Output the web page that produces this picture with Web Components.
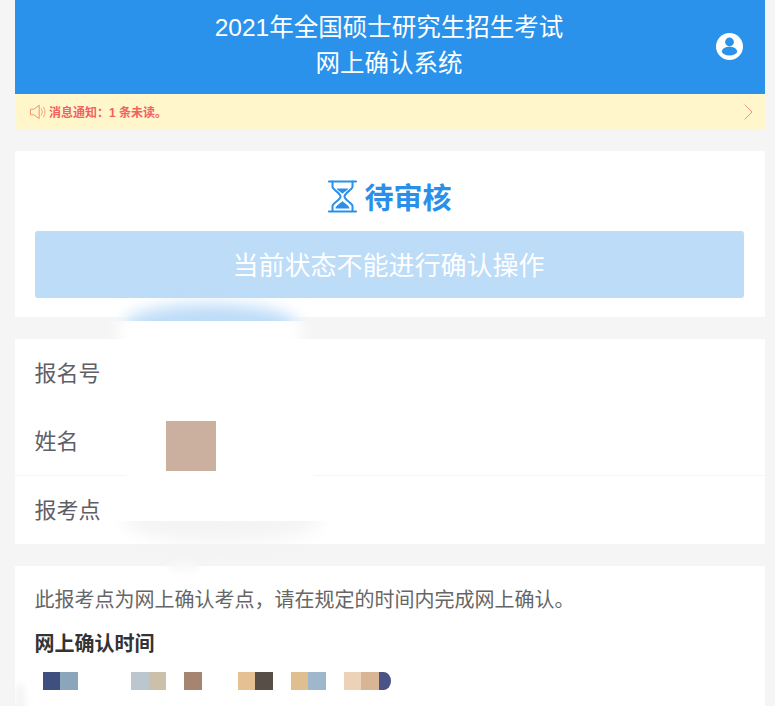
<!DOCTYPE html>
<html lang="zh-CN"><head><meta charset="utf-8"><title>网上确认系统</title>
<style>
html,body{margin:0;padding:0;height:706px;overflow:hidden;background:#f5f5f5;}
body{font-family:"Liberation Sans","Noto Sans CJK SC",sans-serif;position:relative;}
</style></head><body>
<template id="t-shell"><style>
:host{display:flex;flex-direction:column;margin:0 10px 0 15px;position:relative;}
</style><slot></slot></template>

<template id="t-header"><style>
:host{display:flex;height:94px;background:#2a92ea;color:#fff;position:relative;align-items:center;justify-content:center;}
.t{font-size:24.5px;line-height:36px;text-align:center;margin:-2px 2px 0 0;}
.a{position:absolute;right:22px;top:33px;width:27px;height:27px;display:block;}
</style><div class="t"><slot></slot></div>
<svg class="a" viewBox="0 0 27 27"><circle cx="13.5" cy="13.5" r="13.5" fill="#fff"/><circle cx="13.5" cy="9" r="4.4" fill="#2a92ea"/><ellipse cx="13.5" cy="18.2" rx="7.6" ry="4.4" fill="#2a92ea"/></svg></template>

<template id="t-notice"><style>
:host{display:flex;height:36px;background:#fff6cc;align-items:center;padding:0 12px 0 15px;color:#f2605f;font-size:12px;font-weight:bold;}
svg{display:block;flex:none;}
.m{margin-right:2px;}
.x{flex:1;margin-top:-1px;}
</style><svg class="m" width="17" height="16" viewBox="0 0 17 16" fill="none" stroke="#f4966a" stroke-width="1"><path d="M.5 5.2h3.4L9.2 1.2v13.4L3.9 10.8H.5z"/><path d="M11.2 4.6c1.300 2 1.300 4.600 0 6.800M13.400 3c2 3 2 6.800 0 10" stroke-width=".9"/></svg><span class="x"><slot></slot></span>
<svg width="9" height="16" viewBox="0 0 9 16" fill="none" stroke="#f38d86" stroke-width="1"><path d="M.7.7 8 8 .7 15.300"/></svg></template>

<template id="t-card"><style>
:host{display:block;background:#fff;margin-top:var(--gap,21px);}
</style><slot></slot></template>

<template id="t-status"><style>
:host{display:flex;flex-direction:column;height:166px;box-sizing:border-box;padding:23px 21px 0 20px;}
.h{display:flex;justify-content:center;align-items:center;height:44px;gap:6px;color:#2a8fe8;font-size:29px;font-weight:bold;margin-bottom:13px;}
.b{height:67px;border-radius:3px;background:#bcdcf8;color:#fff;font-size:26px;display:flex;align-items:center;justify-content:center;padding:0 2px 2px 0;box-sizing:border-box;}
svg{display:block;}
</style><div class="h"><svg width="31" height="35" viewBox="0 0 31 35" fill="none" stroke="#2a8fe8" stroke-width="2.200" stroke-linecap="round"><path d="M2 2.500h27M2 32.500h27"/><path d="M5.500 2.500v5.300c0 3 8 6 8 9.700s-8 6.500-8 9.500V32M25.500 2.500v5.300c0 3-8 6-8 9.700s8 6.500 8 9.500V32" stroke-width="2"/><path d="M9.500 9.500h12c-1.500 2.300-4.400 3.500-6 5.300-1.600-1.800-4.500-3-6-5.300zM8.500 29.500c.5-3.500 5-5 7-7.500 2 2.500 6.500 4 7 7.500z" fill="#2a8fe8" stroke="none"/></svg><slot name="head"></slot></div><div class="b"><slot></slot></div></template>

<template id="t-row"><style>
:host{display:flex;align-items:center;box-sizing:border-box;height:68px;padding:0 20px 4px 19.500px;color:#5e5e66;font-size:22px;}
:host([line]){border-bottom:1px solid #f5f5f5;}
</style><slot></slot></template>

<template id="t-swatches"><style>
:host{display:flex;height:18px;margin-left:8px;}
::slotted(i){display:block;width:17.700px;height:18px;}
</style><slot></slot></template>

<template id="t-smudge"><style>
:host{display:block;position:absolute;filter:blur(var(--b,7px));background:var(--c,#fff);border-radius:50%;}
</style></template>

<app-shell>
<app-header>2021年全国硕士研究生招生考试<br>网上确认系统</app-header>
<app-notice>消息通知：1&nbsp;条未读。</app-notice>
<app-card><app-status><span slot="head">待审核</span>当前状态不能进行确认操作</app-status></app-card>
<app-card style="--gap:22px;height:205px;">
<app-row style="height:68px;">报名号</app-row>
<app-row line style="height:69px;">姓名</app-row>
<app-row style="height:68px;">报考点</app-row>
</app-card>
<app-card style="--gap:22px;height:160px;box-sizing:border-box;padding:20px 20px 0 19.500px;color:#666;font-size:20px;line-height:28px;">
此报考点为网上确认考点，请在规定的时间内完成网上确认。
<div style="font-weight:bold;color:#333;margin-top:16px;margin-bottom:14px;">网上确认时间</div>
<app-swatches>
<i style="background:#3f5080"></i><i style="background:#8ba5bb"></i><i style="width:53px"></i><i style="background:#bcc6ce"></i><i style="background:#cdc0aa"></i><i></i><i style="background:#a58570"></i><i style="width:36px"></i><i style="background:#e4c092"></i><i style="background:#584e48"></i><i></i><i style="background:#dfbf90"></i><i style="background:#9fb7ca"></i><i></i><i style="background:#ecd3b8"></i><i style="background:#d7b595"></i><i style="background:#495385;width:12px;border-radius:0 7px 7px 0/0 9px 9px 0"></i>
</app-swatches>
</app-card>
</app-shell>

<app-smudge style="left:118px;top:312px;width:184px;height:40px;--c:#fff;--b:8px;border-radius:20%;"></app-smudge>
<app-smudge style="left:124px;top:304px;width:174px;height:44px;--c:#bcdcf8;--b:8px;clip-path:inset(-30px -30px 27px -30px);"></app-smudge>
<app-smudge style="left:127px;top:400px;width:186px;height:122px;--c:#fff;--b:3px;border-radius:4%;"></app-smudge>
<div style="position:absolute;left:166px;top:421px;width:50px;height:50px;background:#cbb09f;"></div>
<app-smudge style="left:124px;top:497px;width:196px;height:46px;--c:#f4f4f4;--b:8px;clip-path:inset(24px -30px -30px -30px);"></app-smudge>
<app-smudge style="left:166px;top:561px;width:34px;height:10px;--c:#f8f8f8;--b:3px;"></app-smudge>
<app-smudge style="left:15px;top:682px;width:10px;height:50px;--c:#f3f3f3;--b:3px;"></app-smudge>

<script>
function reg(name,tpl){customElements.define(name,class extends HTMLElement{constructor(){super();this.attachShadow({mode:'open'}).appendChild(document.getElementById(tpl).content.cloneNode(true));}});}
reg('app-shell','t-shell');reg('app-header','t-header');reg('app-notice','t-notice');reg('app-card','t-card');reg('app-status','t-status');reg('app-row','t-row');reg('app-swatches','t-swatches');reg('app-smudge','t-smudge');
</script>
</body></html>
